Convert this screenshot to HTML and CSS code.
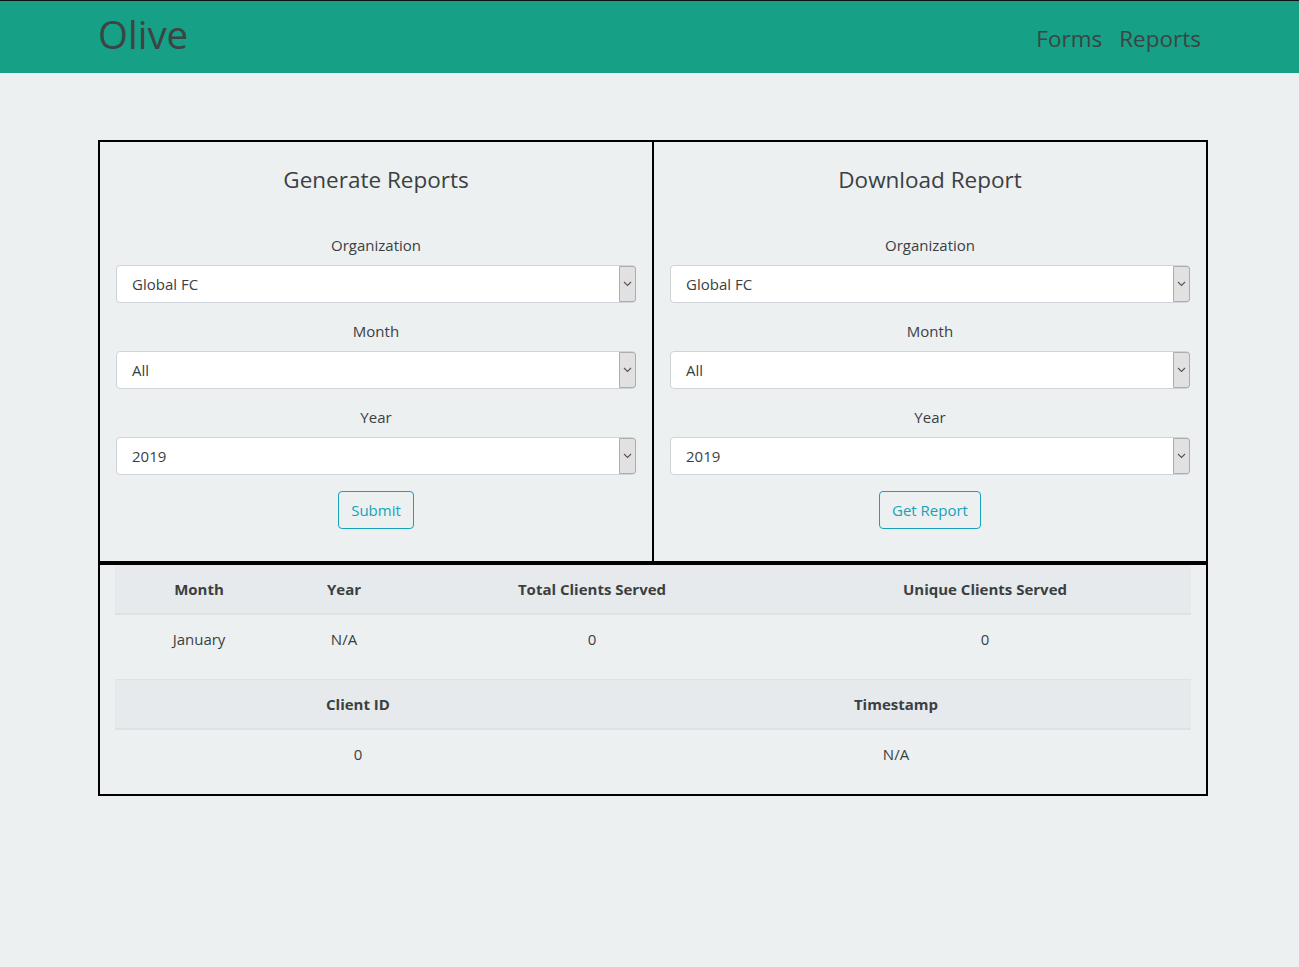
FILE: index.html
```html
<!DOCTYPE html>
<html lang="en">
<head>
<meta charset="utf-8">
<title>Olive</title>
<link rel="stylesheet" href="styles.css">
</head>
<body>
<header class="navbar">
  <div class="container nav-inner">
    <a class="brand" href="#">Olive</a>
    <nav class="nav-links">
      <a href="#">Forms</a>
      <a href="#">Reports</a>
    </nav>
  </div>
</header>
<main class="container page">
  <div class="panels">
    <section class="panel">
      <h3 class="panel-title">Generate Reports</h3>
      <div class="form-group">
        <label>Organization</label>
        <div class="select"><span class="select-value">Global FC</span><span class="select-arrow"><svg width="9" height="6" viewBox="0 0 9 6"><path d="M1 1 L4.5 4.5 L8 1" fill="none" stroke="#555" stroke-width="1.1"/></svg></span></div>
      </div>
      <div class="form-group">
        <label>Month</label>
        <div class="select"><span class="select-value">All</span><span class="select-arrow"><svg width="9" height="6" viewBox="0 0 9 6"><path d="M1 1 L4.5 4.5 L8 1" fill="none" stroke="#555" stroke-width="1.1"/></svg></span></div>
      </div>
      <div class="form-group">
        <label>Year</label>
        <div class="select"><span class="select-value">2019</span><span class="select-arrow"><svg width="9" height="6" viewBox="0 0 9 6"><path d="M1 1 L4.5 4.5 L8 1" fill="none" stroke="#555" stroke-width="1.1"/></svg></span></div>
      </div>
      <div class="actions"><button class="btn">Submit</button></div>
    </section>
    <section class="panel panel-right">
      <h3 class="panel-title">Download Report</h3>
      <div class="form-group">
        <label>Organization</label>
        <div class="select"><span class="select-value">Global FC</span><span class="select-arrow"><svg width="9" height="6" viewBox="0 0 9 6"><path d="M1 1 L4.5 4.5 L8 1" fill="none" stroke="#555" stroke-width="1.1"/></svg></span></div>
      </div>
      <div class="form-group">
        <label>Month</label>
        <div class="select"><span class="select-value">All</span><span class="select-arrow"><svg width="9" height="6" viewBox="0 0 9 6"><path d="M1 1 L4.5 4.5 L8 1" fill="none" stroke="#555" stroke-width="1.1"/></svg></span></div>
      </div>
      <div class="form-group">
        <label>Year</label>
        <div class="select"><span class="select-value">2019</span><span class="select-arrow"><svg width="9" height="6" viewBox="0 0 9 6"><path d="M1 1 L4.5 4.5 L8 1" fill="none" stroke="#555" stroke-width="1.1"/></svg></span></div>
      </div>
      <div class="actions"><button class="btn">Get Report</button></div>
    </section>
  </div>
  <section class="results">
    <table class="table table-first">
      <colgroup><col class="c-month"><col class="c-year"><col class="c-total"><col class="c-unique"></colgroup>
      <thead>
        <tr><th>Month</th><th>Year</th><th>Total Clients Served</th><th>Unique Clients Served</th></tr>
      </thead>
      <tbody>
        <tr><td>January</td><td>N/A</td><td>0</td><td>0</td></tr>
      </tbody>
    </table>
    <table class="table">
      <colgroup><col class="c-id"><col class="c-time"></colgroup>
      <thead>
        <tr><th>Client ID</th><th>Timestamp</th></tr>
      </thead>
      <tbody>
        <tr><td>0</td><td>N/A</td></tr>
      </tbody>
    </table>
  </section>
</main>
</body>
</html>
```
FILE: styles.css
```css
* { box-sizing: border-box; }
html, body { margin: 0; padding: 0; }
body {
  background: #ecf0f1;
  color: #3b3f42;
  font-family: "Open Sans", "Noto Sans", "Liberation Sans", sans-serif;
  font-size: 15px;
  line-height: 24px;
}
.container {
  width: 1110px;
  margin-left: 98px;
}
.navbar {
  background: #16a085;
  border-top: 1px solid #111;
  height: 73px;
}
.nav-inner {
  display: flex;
  align-items: center;
  justify-content: space-between;
  height: 72px;
}
.brand {
  color: #3d4444;
  text-decoration: none;
  font-size: 38.5px;
  font-weight: 400;
  line-height: 1;
  margin-top: -5px;
}
.nav-links {
  display: flex;
  gap: 1px;
  margin-top: 4px;
  margin-right: 7px;
}
.nav-links a {
  color: #3d4444;
  text-decoration: none;
  font-size: 22.5px;
  line-height: 1.5;
  padding: 0 8px;
}
.nav-links a:last-child { padding-right: 0; }
.page {
  margin-top: 67px;
}
.panels {
  display: flex;
}
.panel {
  flex: 1 1 0;
  border: 2px solid #000;
  padding: 16px;
  text-align: center;
}
.panel-right { margin-left: -2px; }
.panel-title {
  font-size: 22.5px;
  font-weight: 400;
  margin: 8px 0 40px;
  line-height: 27px;
  color: #3b3f42;
}
.form-group { margin-bottom: 16px; }
.form-group label {
  display: block;
  margin-bottom: 8px;
}
.select {
  display: flex;
  align-items: stretch;
  height: 38px;
  background: #fff;
  border: 1px solid #ced4da;
  border-radius: 4px;
  text-align: left;
  padding: 0 0 0 15px;
}
.select-value {
  flex: 1;
  align-self: center;
  color: #3b3f42;
}
.select-arrow {
  width: 17px;
  background: #e1e1e1;
  border: 1px solid #adadad;
  border-radius: 0 3px 3px 0;
  display: flex;
  align-items: center;
  justify-content: center;
  margin: 0 -1px 0 0;
}
.actions { margin-bottom: 16px; }
.btn {
  font-family: inherit;
  font-size: 15px;
  line-height: 24px;
  color: #17a2b8;
  background: transparent;
  border: 1px solid #17a2b8;
  border-radius: 4px;
  padding: 6px 12px;
  height: 38px;
}
.results {
  border: 2px solid #000;
  padding: 0 15px;
}
.table {
  width: 100%;
  border-collapse: collapse;
  margin-bottom: 16px;
  text-align: center;
}
.table th {
  font-weight: 700;
  background: #e6eaec;
  padding: 12px;
  border-top: 1px solid #dee2e6;
  border-bottom: 2px solid #dee2e6;
}
.table td {
  padding: 12px;
  vertical-align: top;
}
.table-first th { border-top: 0; }
.c-month { width: 168px; }
.c-year { width: 122px; }
.c-total { width: 374px; }
.c-unique { width: 412px; }
.c-id { width: 486px; }
.c-time { width: 590px; }
```
